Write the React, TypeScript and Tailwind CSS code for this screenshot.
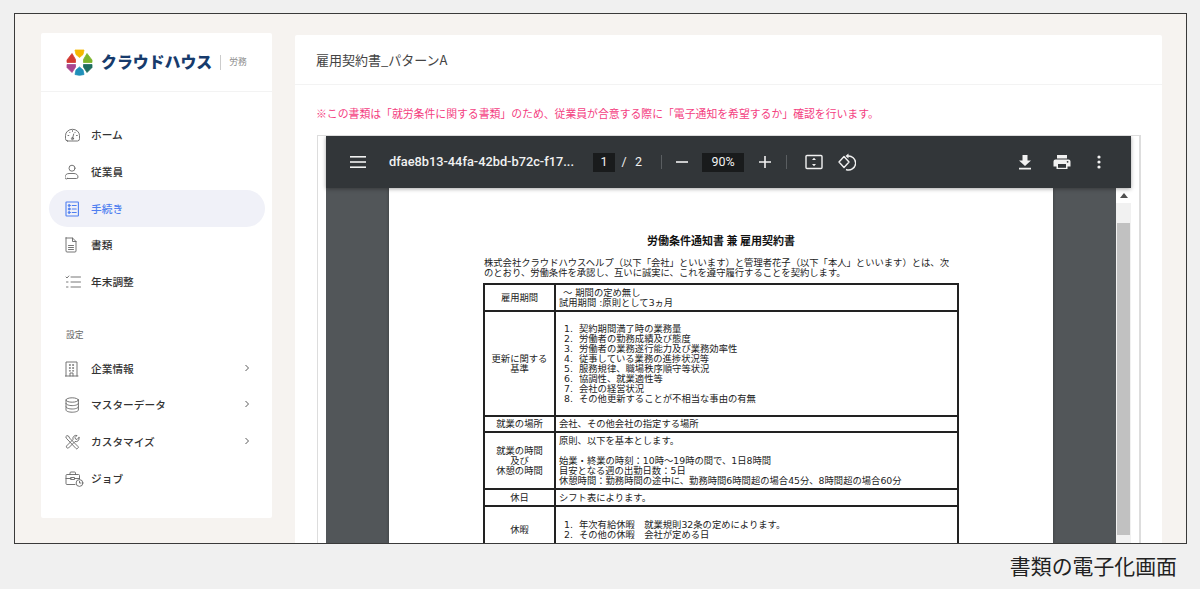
import React from "react";

const ui = "[font-family:'Noto_Sans_CJK_JP','Noto_Sans',sans-serif]";

const S = ({ children, c = "#666", dx = 0 }: { children: React.ReactNode; c?: string; dx?: number }) => (
  <svg viewBox={`${dx} 0 16 16`} width="16" height="16" fill="none" stroke={c} strokeWidth="0.9" strokeLinecap="round" strokeLinejoin="round" className="shrink-0">
    {children}
  </svg>
);

const icons: Record<string, React.ReactNode> = {
  home: (
    <S dx={0.5}>
      <path d="M3 14h10a2.2 2.2 0 0 0 2-2.4V8.500a7 6.200 0 0 0-14 0v3.100A2.200 2.200 0 0 0 3 14z" />
      <path d="M8 11.500l1.200-4.500M3.500 8.500h.8M12 8.500h.8M5 5.200l.5.500M8 3.600v.8M10.800 5.200l-.5.500" />
      <circle cx="8" cy="11.600" r="1.100" />
    </S>
  ),
  user: (
    <S dx={0.500}>
      <circle cx="7.500" cy="4.200" r="3" />
      <path d="M3 14.500h9a1.500 1.500 0 0 0 1.500-1.500c0-2-1.700-3.500-4-3.500h-5c-2.300 0-4 1.500-4 3.500A1.500 1.500 0 0 0 3 14.500z" />
    </S>
  ),
  form: (
    <S c="#4f7ff0" dx={0.800}>
      <rect x="1.800" y="1" width="12.400" height="14" rx="0.600" strokeWidth="1.100" />
      <path d="M8 4.500h4M8 8h4M8 11.500h4" strokeWidth="1.100" />
      <circle cx="5" cy="4.500" r="1" fill="#4f7ff0" />
      <circle cx="5" cy="8" r="1" fill="#4f7ff0" />
      <circle cx="5" cy="11.500" r="1" fill="#4f7ff0" />
    </S>
  ),
  file: (
    <S dx={2}>
      <path d="M3 1h6.500L13 4.500V14a1 1 0 0 1-1 1H4a1 1 0 0 1-1-1V1z" />
      <path d="M9.500 1v3.500H13M5.500 8.500h5M5.500 10.500h5M5.500 12.500h5" />
    </S>
  ),
  checks: (
    <S>
      <path d="M1 3l1 1 1.800-2M6 3h9.500M6 8h9.500M6 13h9.500M1.500 8h1.500M1.500 13h1.500" />
    </S>
  ),
  building: (
    <S dx={1.500}>
      <path d="M2.500 15V1h11v14M1.500 15h13M6.500 15v-3h3v3" />
      <path d="M6 4h.8M9.200 4h.8M6 7h.8M9.200 7h.8M6 9.800h.8M9.200 9.800h.8" strokeWidth="1.300" />
    </S>
  ),
  db: (
    <S dx={0.800}>
      <ellipse cx="8" cy="3" rx="6.200" ry="2.200" />
      <path d="M1.800 3v10c0 1.200 2.800 2.200 6.200 2.200s6.200-1 6.200-2.200V3" />
      <path d="M1.800 6.400c0 1.200 2.800 2.200 6.200 2.200s6.200-1 6.200-2.200M1.800 9.800c0 1.200 2.800 2.200 6.200 2.200s6.200-1 6.200-2.200" />
    </S>
  ),
  tools: (
    <S dx={0.500}>
      <path d="M1.500 2.500l1-1 2 1 .5 1.500 8.500 8.500a1 1 0 0 1 0 1.500l-.5.500a1 1 0 0 1-1.500 0L3.500 6 2.500 5z" />
      <path d="M14.500 3.500l-2 2-1.500-.5-.5-1.500 2-2a3.200 3.200 0 0 0-4 4L2 12a1.500 1.500 0 0 0 2 2l6.500-6.500a3.200 3.200 0 0 0 4-4z" />
    </S>
  ),
  job: (
    <svg viewBox="0 0 19 16" width="19" height="16" fill="none" stroke="#666" strokeWidth="0.900" strokeLinecap="round" strokeLinejoin="round" className="shrink-0">
      <path d="M10 13.500H2a1 1 0 0 1-1-1V4.500a1 1 0 0 1 1-1h11.500a1 1 0 0 1 1 1V8" />
      <path d="M5 3.500V2a1 1 0 0 1 1-1h3.500a1 1 0 0 1 1 1v1.500M1 7.500h5M9.500 7.500h5M6 6.500h3.500v2H6z" />
      <circle cx="14.500" cy="12" r="3.400" />
      <path d="M14.500 10.200V12h1.500" />
    </svg>
  ),
};

const Chevron = () => (
  <svg viewBox="0 0 8 10" width="6" height="8" fill="none" stroke="#555" strokeWidth="1.300" className="ml-auto mr-[15px] -mt-[2px]">
    <path d="M2 1l4 4-4 4" />
  </svg>
);

const NavItem = ({ icon, label, active, chevron }: { icon: string; label: string; active?: boolean; chevron?: boolean }) => (
  <div className={`ml-2 mr-[7px] flex h-[36.700px] items-center rounded-full pl-4 text-[10.700px] font-medium ${active ? "bg-[#f0f1f8] text-[#4f7ff0]" : "text-[#333]"}`}>
    <span className="flex w-[26px] shrink-0 items-center">{icons[icon]}</span>
    <span className="whitespace-nowrap">{label}</span>
    {chevron && <Chevron />}
  </div>
);

const Logo = () => (
  <svg viewBox="-0.500 -0.500 27 27" width="27" height="27" strokeLinejoin="round" strokeWidth="0.800" className="shrink-0">
    <path d="M8.500 0.500h9L16.500 5 13 8 9.500 5z" fill="#f5b800" stroke="#f5b800" />
    <path d="M20.500 4l5 6.500v2.500H17v-3z" fill="#7cb52c" stroke="#7cb52c" />
    <path d="M5.500 4L.5 10.500v2.500H9v-3z" fill="#d23a32" stroke="#d23a32" />
    <path d="M.5 15H9v2.500L5.500 23 .5 18z" fill="#a9468f" stroke="#a9468f" />
    <path d="M17 15h8.500v3l-5 5L17 17.500z" fill="#1f6e60" stroke="#1f6e60" />
    <path d="M13 17.500l3.500 3 1 4.500a13 13 0 0 1-9 0l1-4.500z" fill="#1f8fb9" stroke="#1f8fb9" />
  </svg>
);

const Sidebar = () => (
  <aside className={`flex h-[485px] w-[231px] shrink-0 flex-col rounded-[2px] bg-white ${ui}`}>
    <div className="flex h-[59px] shrink-0 items-center border-b border-[#f3f3f3] pl-[25px]">
      <Logo />
      <span className="ml-[8px] whitespace-nowrap text-[15.900px] font-black leading-none text-[#173b6c]">クラウドハウス</span>
      <span className="ml-[8px] h-[15px] w-px bg-[#cccccc]" />
      <span className="ml-[8px] whitespace-nowrap text-[8.800px] text-[#8c8c8c]">労務</span>
    </div>
    <nav className="mt-[25px] flex flex-col">
      <NavItem icon="home" label="ホーム" />
      <NavItem icon="user" label="従業員" />
      <NavItem icon="form" label="手続き" active />
      <NavItem icon="file" label="書類" />
      <NavItem icon="checks" label="年末調整" />
    </nav>
    <div className="mt-[27px] pl-[25px] text-[8.800px] leading-[16px] text-[#666]">設定</div>
    <nav className="mt-[7px] flex flex-col">
      <NavItem icon="building" label="企業情報" chevron />
      <NavItem icon="db" label="マスターデータ" chevron />
      <NavItem icon="tools" label="カスタマイズ" chevron />
      <NavItem icon="job" label="ジョブ" />
    </nav>
  </aside>
);

const Sep = ({ ml }: { ml: string }) => <span className={`h-[14px] w-px shrink-0 bg-[#5a5e61] ${ml}`} />;

const Toolbar = () => (
  <div className="relative z-10 flex h-[52px] shrink-0 items-center bg-[#323639] font-['Roboto',sans-serif] text-[#f1f1f1] shadow-[0_1px_4px_rgba(0,0,0,0.35)]">
    <svg viewBox="0 0 16 12" width="16" height="12" fill="#f1f1f1" className="ml-[24px] shrink-0">
      <rect y="0" width="16" height="1.600" />
      <rect y="5.200" width="16" height="1.600" />
      <rect y="10.400" width="16" height="1.600" />
    </svg>
    <span className="ml-[23px] w-[186px] shrink-0 whitespace-nowrap text-[12.800px] font-medium">dfae8b13-44fa-42bd-b72c-f17...</span>
    <span className="ml-[18px] flex h-[19px] w-[22px] shrink-0 items-center justify-center bg-[#191b1c] text-[12.500px]">1</span>
    <span className="ml-[4px] w-[10px] shrink-0 text-center text-[12.500px]">/</span>
    <span className="ml-[6px] text-[12.500px]">2</span>
    <Sep ml="ml-[19px]" />
    <svg viewBox="0 0 14 14" width="14" height="14" className="ml-[13px] shrink-0"><rect x="1" y="6.200" width="12" height="1.600" fill="#f1f1f1" /></svg>
    <span className="ml-[13px] flex h-[19px] w-[42px] shrink-0 items-center justify-center bg-[#191b1c] text-[12.500px]">90%</span>
    <svg viewBox="0 0 14 14" width="14" height="14" className="ml-[14px] shrink-0"><path d="M1 7h12M7 1v12" stroke="#f1f1f1" strokeWidth="1.600" /></svg>
    <Sep ml="ml-[14px]" />
    <svg viewBox="0 0 18 16" width="18" height="16" fill="none" className="ml-[18px] shrink-0">
      <rect x="1" y="1.500" width="16" height="13" rx="1" stroke="#f1f1f1" strokeWidth="1.400" />
      <path d="M9 3.800l2 2.200H7zM9 12.200L7 10h4z" fill="#f1f1f1" />
    </svg>
    <svg viewBox="0 0 18 18" width="18" height="18" fill="none" className="ml-[15px] shrink-0">
      <path d="M6 3.500l5 5.500-5 5.500L1 9z" stroke="#f1f1f1" strokeWidth="1.400" strokeLinejoin="round" />
      <path d="M9 3.200a7 7 0 1 1-1 13.300" stroke="#f1f1f1" strokeWidth="1.400" />
      <path d="M10.500 0.500v5l-3-2.500z" fill="#f1f1f1" />
    </svg>
    <svg viewBox="0 0 14 16" width="14" height="16" className="ml-auto shrink-0" fill="#f1f1f1">
      <path d="M4.500 1h5v5.500H13L7 12 1 6.500h3.500zM1 13.800h12v1.600H1z" />
    </svg>
    <svg viewBox="0 0 18 16" width="18" height="16" className="ml-[21px] shrink-0" fill="#f1f1f1">
      <path d="M4 1h10v3.500H4zM2.500 5.500h13A2 2 0 0 1 17.500 7.500v5H14.500V15h-11v-2.500H.5v-5a2 2 0 0 1 2-2z" />
      <rect x="5" y="10" width="8" height="3.800" fill="#323639" />
      <circle cx="14.600" cy="7.800" r="0.900" fill="#323639" />
    </svg>
    <svg viewBox="0 0 4 14" width="4" height="14" className="ml-[26px] mr-[30px] shrink-0" fill="#f1f1f1">
      <circle cx="2" cy="2" r="1.600" />
      <circle cx="2" cy="7" r="1.600" />
      <circle cx="2" cy="12" r="1.600" />
    </svg>
  </div>
);

const Ol = ({ items }: { items: string[] }) => (
  <ol className="pl-[5px]">
    {items.map((t, i) => (
      <li key={t} className="flex">
        <span className="w-[15px] shrink-0">{i + 1}.</span>
        <span>{t}</span>
      </li>
    ))}
  </ol>
);

const Row = ({ h, head, children }: { h: string; head: React.ReactNode; children: React.ReactNode }) => (
  <tr className={h}>
    <th className="border-2 border-[#222] p-0 text-center align-middle font-normal">{head}</th>
    <td className="border-2 border-[#222] px-[3px] py-0 align-middle">{children}</td>
  </tr>
);

const Doc = () => (
  <div className="flex h-full w-[664px] shrink-0 flex-col bg-white px-[95px] font-['DejaVu_Sans','Noto_Sans_CJK_JP',sans-serif] text-[9.320px] leading-[10px] text-[#222] shadow-[0_0_3px_rgba(0,0,0,0.3)]">
    <h2 className="mt-[45px] text-center font-['Noto_Sans_CJK_JP',sans-serif] text-[11px] font-bold leading-[14px] text-[#111]">労働条件通知書 兼 雇用契約書</h2>
    <p className="mt-[11px] whitespace-nowrap">
      株式会社クラウドハウスヘルプ（以下「会社」といいます）と管理者花子（以下「本人」といいます）とは、次
      <br />
      のとおり、労働条件を承認し、互いに誠実に、これを遵守履行することを契約します。
    </p>
    <table className="-ml-px mt-[5px] w-[476px] shrink-0 table-fixed border-collapse whitespace-nowrap">
      <colgroup>
        <col className="w-[71px]" />
        <col />
      </colgroup>
      <tbody>
        <Row h="h-[27px]" head="雇用期間">
          <div className="pl-[4px]">〜 期間の定め無し</div>
          <div>試用期間 :原則として3ヵ月</div>
        </Row>
        <Row h="h-[105px]" head={<>更新に関する<br />基準</>}>
          <Ol items={["契約期間満了時の業務量", "労働者の勤務成績及び態度", "労働者の業務遂行能力及び業務効率性", "従事している業務の進捗状況等", "服務規律、職場秩序順守等状況", "協調性、就業適性等", "会社の経営状況", "その他更新することが不相当な事由の有無"]} />
        </Row>
        <Row h="h-[16px]" head="就業の場所">会社、その他会社の指定する場所</Row>
        <Row h="h-[57px]" head={<>就業の時間<br />及び<br />休憩の時間</>}>
          <div>原則、以下を基本とします。</div>
          <div className="h-[10px]" />
          <div>始業・終業の時刻：10時〜19時の間で、1日8時間</div>
          <div>目安となる週の出勤日数：5日</div>
          <div>休憩時間：勤務時間の途中に、勤務時間6時間超の場合45分、8時間超の場合60分</div>
        </Row>
        <Row h="h-[17px]" head="休日">シフト表によります。</Row>
        <Row h="h-[47px]" head="休暇">
          <Ol items={["年次有給休暇　就業規則32条の定めによります。", "その他の休暇　会社が定める日"]} />
        </Row>
      </tbody>
    </table>
  </div>
);

const Scrollbar = () => (
  <div className="flex w-[15px] shrink-0 flex-col bg-[#f1f1f1]">
    <div className="flex h-[15px] items-center justify-center bg-white">
      <svg viewBox="0 0 8 5" width="8" height="5"><path d="M4 0l4 5H0z" fill="#505050" /></svg>
    </div>
    <div className="mx-px mt-[20px] h-[312px] bg-[#c1c1c1]" />
  </div>
);

const Main = () => (
  <main className={`ml-[23px] mt-[2px] flex h-[508px] w-[867px] shrink-0 flex-col self-start rounded-t-[2px] bg-white ${ui}`}>
    <div className="flex h-[50px] shrink-0 items-center border-b border-[#f3f3f3] pl-[21px] font-['Noto_Sans_CJK_JP','Roboto',sans-serif] text-[13px] text-[#444]">雇用契約書_パターンA</div>
    <p className="mt-[20px] pl-[21px] text-[10.850px] leading-[16px] text-[#f4407f]">※この書類は「就労条件に関する書類」のため、従業員が合意する際に「電子通知を希望するか」確認を行います。</p>
    <div className="ml-[22px] mt-[14px] flex w-[824px] flex-1 flex-col overflow-hidden border-l border-r-2 border-t border-[#dddddd] px-[8px]">
      <Toolbar />
      <div className="flex min-h-0 flex-1 bg-[#525659]">
        <div className="w-[63px] shrink-0" />
        <Doc />
        <div className="w-[63px] shrink-0" />
        <Scrollbar />
      </div>
    </div>
  </main>
);

export default function App() {
  return (
    <div className="flex h-[589px] w-[1200px] flex-col overflow-hidden bg-[#f0f0f0]">
      <div className="ml-[14px] mt-[13px] flex h-[531px] w-[1173px] shrink-0 items-start overflow-hidden border border-[#3a3a3a] bg-[#f6f3f0] pl-[26px] pt-[19px]">
        <Sidebar />
        <Main />
      </div>
      <div className="mt-[9px] pr-[23px] text-right font-['Noto_Sans_CJK_JP',sans-serif] text-[20.900px] leading-[24px] text-[#222]">書類の電子化画面</div>
    </div>
  );
}
